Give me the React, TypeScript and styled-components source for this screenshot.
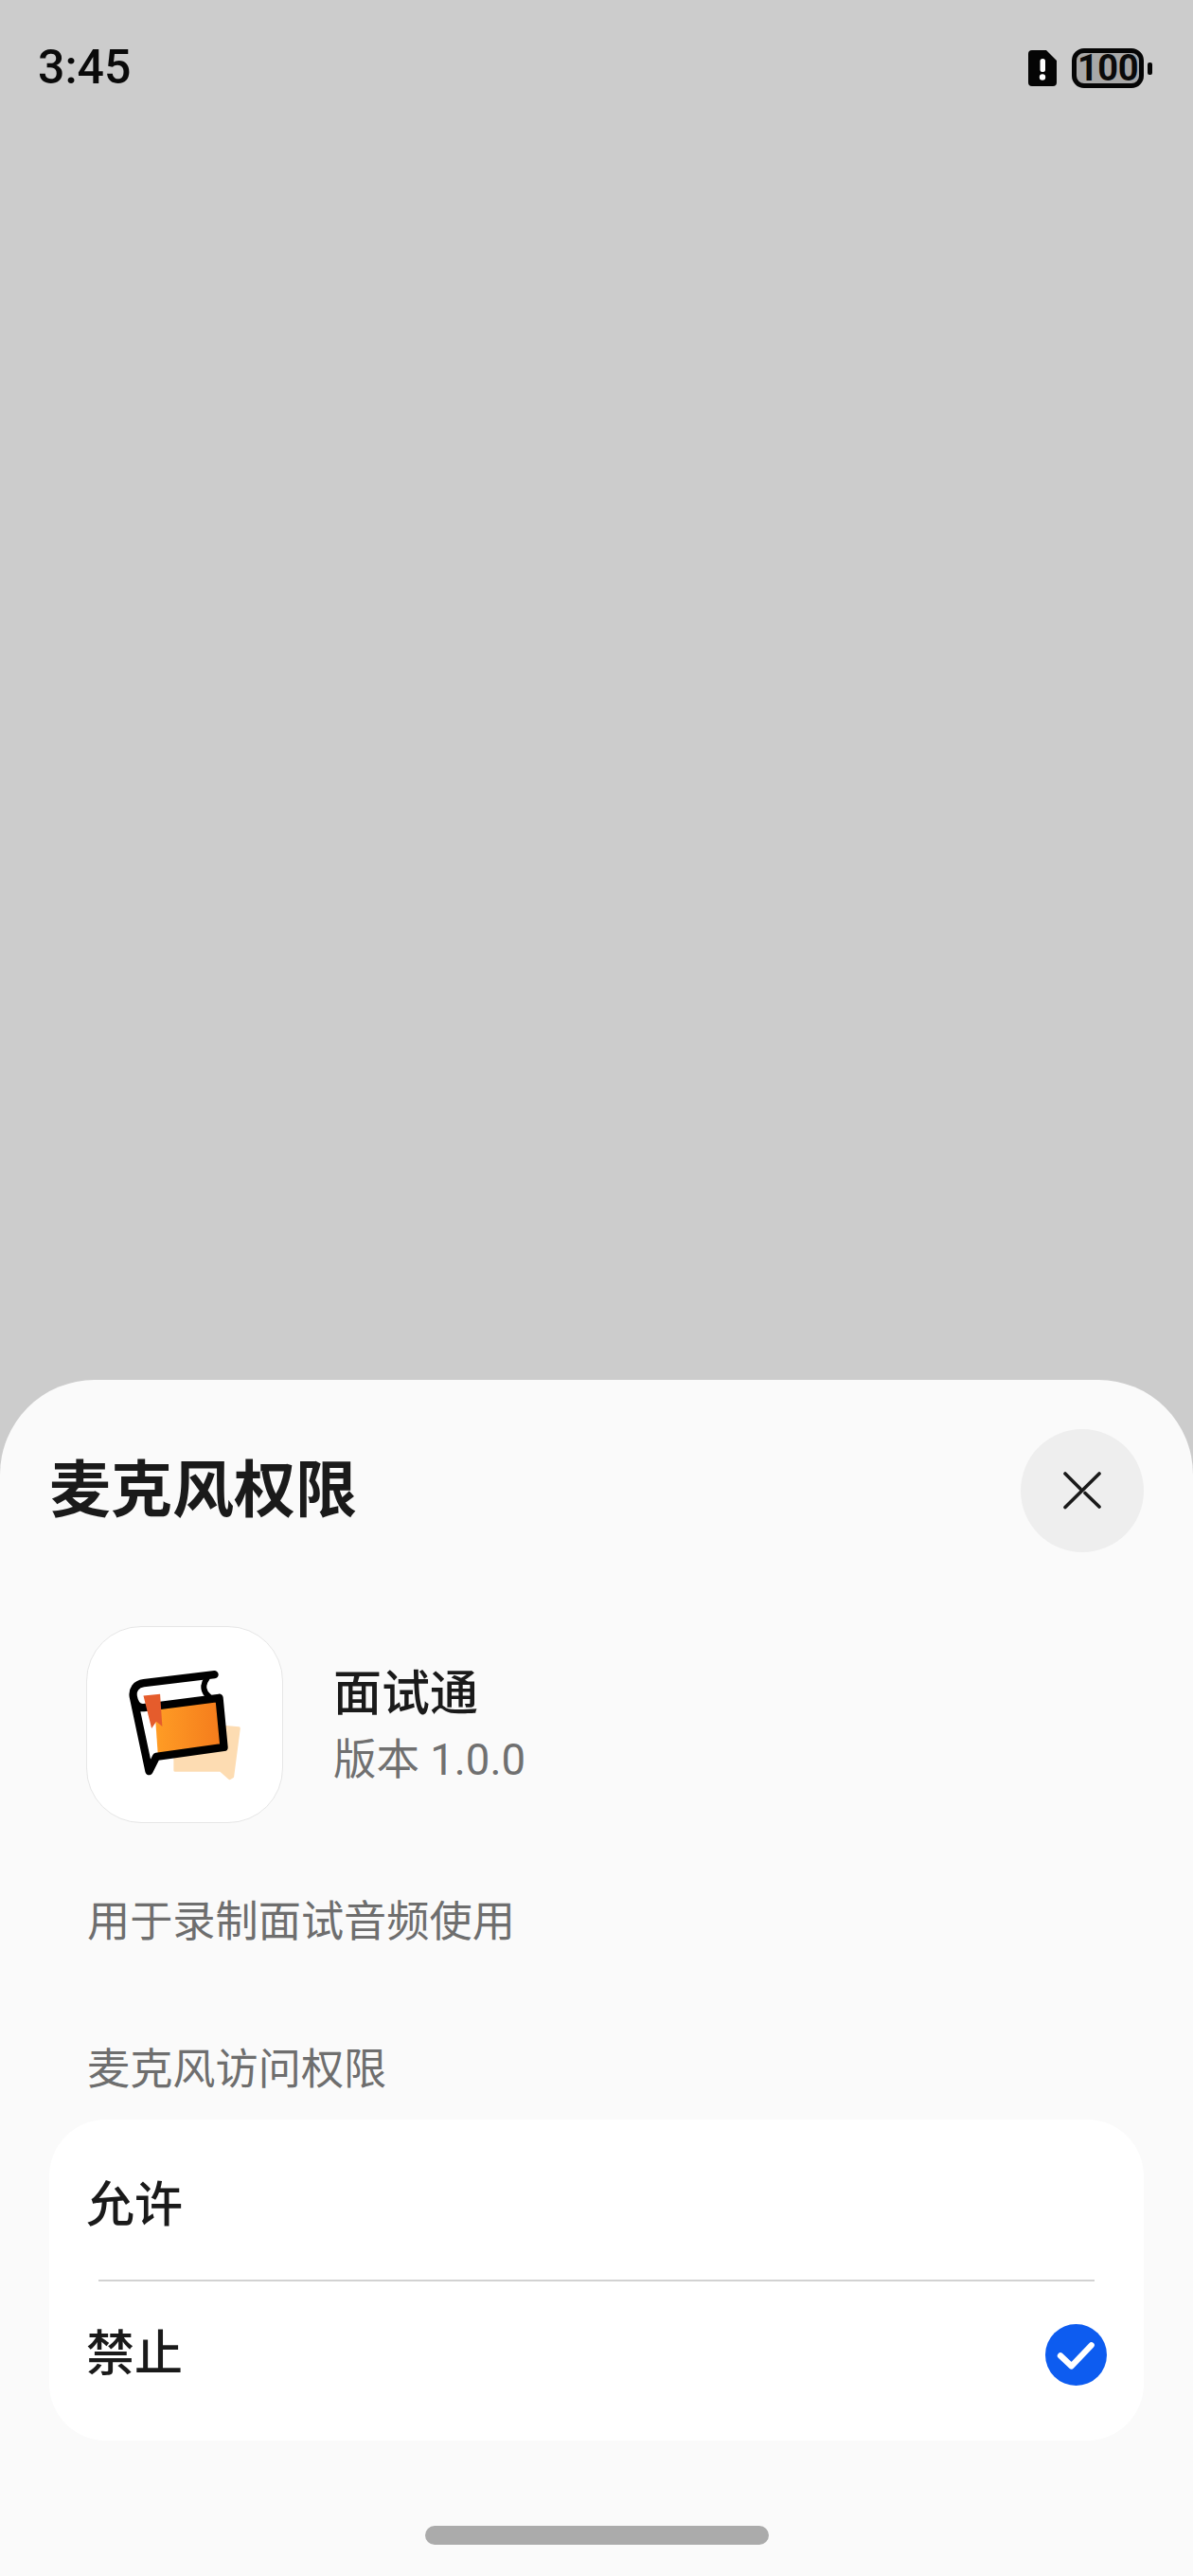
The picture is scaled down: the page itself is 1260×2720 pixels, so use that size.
import React from "react";
import styled, { createGlobalStyle } from "styled-components";

const Global = createGlobalStyle`
  html, body { margin: 0; padding: 0; background: #cccccc; }
  body { font-family: "Noto Sans CJK SC", Roboto, sans-serif; }
  * { box-sizing: border-box; }
`;

const Screen = styled.div`
  width: 1260px;
  height: 2720px;
  display: flex;
  flex-direction: column;
  background: #cccccc;
  overflow: hidden;
`;

const StatusBar = styled.header`
  height: 142px;
  padding: 42px 52px 0 40px;
  display: flex;
  justify-content: space-between;
  align-items: flex-start;
`;

const Time = styled.span`
  font: 500 50px/58px Roboto, sans-serif;
  color: #0a0a0a;
`;

const StatusIcons = styled.div`
  display: flex;
  align-items: center;
  gap: 16px;
  margin-top: 9px;
`;

const Battery = styled.div`
  width: 76px;
  height: 42px;
  border: 5px solid #050505;
  border-radius: 13px;
  background: #a8a8a8;
  display: flex;
  align-items: center;
  justify-content: center;
  font: 700 38px/32px Roboto, sans-serif;
  letter-spacing: -0.5px;
  color: #0a0a0a;
  position: relative;
  &::after {
    content: "";
    position: absolute;
    right: -14px;
    top: 10px;
    width: 5px;
    height: 13px;
    border-radius: 2px;
    background: #050505;
  }
`;

const Backdrop = styled.div`
  flex: 1;
`;

const Sheet = styled.section`
  height: 1263px;
  background: #fafafa;
  border-radius: 100px 100px 0 0;
  padding: 52px 52px 0;
  display: flex;
  flex-direction: column;
`;

const SheetHead = styled.div`
  display: flex;
  justify-content: space-between;
  align-items: center;
  height: 130px;
`;

const Title = styled.h1`
  margin: 0 0 13px 0;
  font-size: 65px;
  line-height: 80px;
  font-weight: 700;
  color: #1a1a1a;
`;

const CloseButton = styled.button`
  width: 130px;
  height: 130px;
  border: none;
  border-radius: 50%;
  background: #eeeeee;
  padding: 0;
  display: flex;
  align-items: center;
  justify-content: center;
`;

const AppRow = styled.div`
  display: flex;
  align-items: center;
  gap: 53px;
  margin: 78px 0 0 39px;
`;

const AppIcon = styled.div`
  width: 208px;
  height: 208px;
  border-radius: 58px;
  border: 1.5px solid #e6e6e6;
  background: #ffffff;
  overflow: hidden;
  svg { display: block; width: 100%; height: 100%; }
`;

const AppMeta = styled.div`
  display: flex;
  flex-direction: column;
  gap: 11px;
  padding-bottom: 3px;
`;

const AppName = styled.div`
  font-size: 51px;
  line-height: 68px;
  font-weight: 500;
  color: #1a1a1a;
`;

const Version = styled.div`
  font-size: 45.5px;
  line-height: 60px;
  font-family: Roboto, "Noto Sans CJK SC", sans-serif;
  color: #707070;
`;

const Description = styled.p`
  margin: 69px 0 0 40px;
  font-size: 45.2px;
  line-height: 64px;
  color: #6e6e6e;
`;

const SectionLabel = styled.h2`
  margin: 92px 0 0 40px;
  font-size: 45.2px;
  line-height: 64px;
  font-weight: 400;
  color: #6e6e6e;
`;

const OptionCard = styled.div`
  margin-top: 24px;
  height: 339px;
  background: #ffffff;
  border-radius: 60px;
  display: flex;
  flex-direction: column;
`;

const Option = styled.div<{ $height: number; $shift: number }>`
  height: ${(p) => p.$height}px;
  padding: ${(p) => (p.$shift > 0 ? p.$shift : 0)}px 39px ${(p) => (p.$shift < 0 ? -p.$shift : 0)}px 39px;
  display: flex;
  align-items: center;
  justify-content: space-between;
`;

const OptionLabel = styled.span<{ $raise?: number }>`
  font-size: 51px;
  line-height: 68px;
  font-weight: 500;
  color: #1a1a1a;
  margin-bottom: ${(p) => p.$raise ?? 0}px;
`;

const Divider = styled.hr`
  margin: 0 52px 0 52px;
  border: none;
  height: 2px;
  background: #d2d2d2;
`;

const CheckCircle = styled.span`
  width: 65px;
  height: 65px;
  svg { display: block; width: 100%; height: 100%; }
`;

const HomeBar = styled.div`
  width: 363px;
  height: 20px;
  border-radius: 10px;
  background: #ababab;
  margin: 90px auto 0;
`;

export default function App() {
  return (
    <Screen>
      <Global />
      <StatusBar>
        <Time>3:45</Time>
        <StatusIcons>
          <svg width="30" height="38" viewBox="0 0 30 38">
            <path d="M4 0H19L30 11V34a4 4 0 0 1-4 4H4a4 4 0 0 1-4-4V4a4 4 0 0 1 4-4Z" fill="#050505" />
            <rect x="12.5" y="9" width="5.5" height="14" rx="2.5" fill="#fff" />
            <circle cx="15" cy="28.5" r="3.2" fill="#fff" />
          </svg>
          <Battery>100</Battery>
        </StatusIcons>
      </StatusBar>
      <Backdrop />
      <Sheet>
        <SheetHead>
          <Title>麦克风权限</Title>
          <CloseButton aria-label="关闭">
            <svg width="40" height="40" viewBox="0 0 40 40" fill="none" stroke="#1a1a1a" strokeWidth="3.6" strokeLinecap="round">
              <path d="M38 2 2 37.5" />
              <path d="M2 2 18 18M23 22.5 38 37" />
            </svg>
          </CloseButton>
        </SheetHead>
        <AppRow>
          <AppIcon>
            <svg viewBox="65 50 620 620">
              <defs>
                <linearGradient id="bookFill" x1="0" y1="0" x2="1" y2="0">
                  <stop offset="0" stopColor="#ff9d25" />
                  <stop offset="1" stopColor="#f47b1c" />
                </linearGradient>
              </defs>
              <path d="M345 440V505H490L518 530L527 525L547 372L505 368Z" fill="#fddcb2" stroke="#fddcb2" strokeWidth="10" strokeLinejoin="round" />
              <path d="M280 312L485 285L495 425L290 455Z" fill="url(#bookFill)" />
              <g fill="none" stroke="#000" strokeWidth="25" strokeLinecap="round" strokeLinejoin="round">
                <path d="M470 201L245 228C220 231 208 250 212 272L262 508L285 462L500 432L485 275L245 306C225 308 215 290 212 272" />
                <path d="M445 215C430 235 435 258 452 270" strokeWidth="18" />
              </g>
              <path d="M244 268L297 263L304 366L285 350L270 372Z" fill="#e55c2c" />
            </svg>
          </AppIcon>
          <AppMeta>
            <AppName>面试通</AppName>
            <Version>版本 1.0.0</Version>
          </AppMeta>
        </AppRow>
        <Description>用于录制面试音频使用</Description>
        <SectionLabel>麦克风访问权限</SectionLabel>
        <OptionCard>
          <Option $height={169} $shift={3}>
            <OptionLabel>允许</OptionLabel>
          </Option>
          <Divider />
          <Option $height={168} $shift={-14}>
            <OptionLabel $raise={10}>禁止</OptionLabel>
            <CheckCircle>
              <svg viewBox="192 222 195 195">
                <circle cx="289.5" cy="319.5" r="97.5" fill="#0d5cf0" />
                <path d="M240 322L275 355L338 289" fill="none" stroke="#fff" strokeWidth="19" strokeLinecap="round" strokeLinejoin="round" />
              </svg>
            </CheckCircle>
          </Option>
        </OptionCard>
        <HomeBar />
      </Sheet>
    </Screen>
  );
}
